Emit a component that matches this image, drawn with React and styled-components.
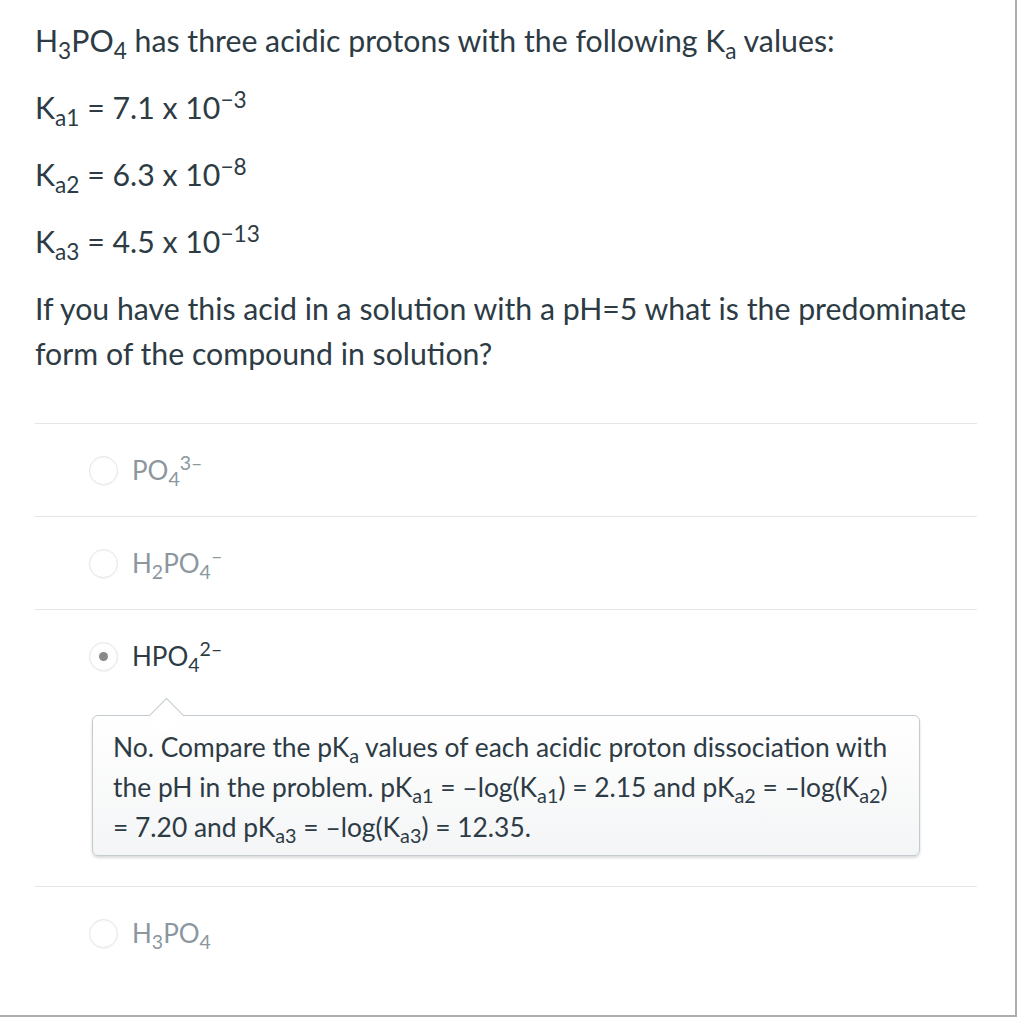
import React from 'react';
import styled, { createGlobalStyle } from 'styled-components';

const GlobalStyle = createGlobalStyle`
  html, body {
    margin: 0;
    padding: 0;
    background: #fff;
  }
  body {
    font-family: Lato, "Noto Sans", sans-serif;
    color: #2d3b45;
  }
`;

const Frame = styled.div`
  box-sizing: border-box;
  width: 1017px;
  height: 1017px;
  border-right: 2px solid #adadad;
  border-bottom: 2px solid #adadad;
  padding: 18px 38px 0 35px;
  overflow: hidden;
`;

const Text = styled.p`
  margin: 0 0 22px;
  font-size: 30.25px;
  line-height: 45px;

  sub, sup {
    font-size: 0.75em;
    line-height: 0;
  }
`;

const Answers = styled.div`
  margin-top: 47px;
`;

const Answer = styled.div`
  border-top: 1px solid #e6e6e6;
  padding: 28px 0 ${p => (p.$last ? '60px' : '28px')};
`;

const Choice = styled.label`
  display: flex;
  align-items: center;
  gap: 14px;
  padding-left: 54px;
  font-size: 26px;
  line-height: 36px;
  color: ${p => (p.$selected ? '#2d3b45' : '#8b969e')};

  sub, sup {
    font-size: 0.75em;
    line-height: 0;
  }
`;

const Radio = styled.span`
  box-sizing: border-box;
  flex: none;
  width: 29px;
  height: 29px;
  border-radius: 50%;
  border: 1px solid #e6e6e6;
  box-shadow: inset 0 1px 2px rgba(0, 0, 0, 0.03), 0 1px 1px rgba(0, 0, 0, 0.05);
  display: flex;
  align-items: center;
  justify-content: center;

  &::after {
    content: '';
    width: 9px;
    height: 9px;
    border-radius: 50%;
    background: #8a8a8a;
    display: ${p => (p.$checked ? 'block' : 'none')};
  }
`;

const Feedback = styled.div`
  position: relative;
  margin: 41px 57px 2px;
  padding: 11px 20px 8px;
  border: 1px solid #c4cbd0;
  border-radius: 6px;
  background: linear-gradient(#ffffff, #f4f5f6);
  box-shadow: 0 2px 3px rgba(0, 0, 0, 0.15);
  font-size: 26.4px;
  line-height: 40px;
  color: #2d3b45;

  sub {
    font-size: 0.75em;
    line-height: 0;
  }

  &::before {
    content: '';
    position: absolute;
    top: -13px;
    left: 61px;
    width: 24px;
    height: 24px;
    background: #fff;
    border-top: 1px solid #c4cbd0;
    border-left: 1px solid #c4cbd0;
    transform: rotate(45deg);
  }
`;

const options = [
  { id: 'a', label: <>PO<sub>4</sub><sup>3–</sup></> },
  { id: 'b', label: <>H<sub>2</sub>PO<sub>4</sub><sup>–</sup></> },
  { id: 'c', label: <>HPO<sub>4</sub><sup>2–</sup></>, selected: true },
  { id: 'd', label: <>H<sub>3</sub>PO<sub>4</sub></> },
];

export default function App() {
  return (
    <>
      <GlobalStyle />
      <Frame>
        <Text>H<sub>3</sub>PO<sub>4</sub> has three acidic protons with the following K<sub>a</sub> values:</Text>
        <Text>K<sub>a1</sub> = 7.1 x 10<sup>−3</sup></Text>
        <Text>K<sub>a2</sub> = 6.3 x 10<sup>−8</sup></Text>
        <Text>K<sub>a3</sub> = 4.5 x 10<sup>−13</sup></Text>
        <Text>If you have this acid in a solution with a pH=5 what is the predominate form of the compound in solution?</Text>
        <Answers>
          {options.map((o, i) => (
            <Answer key={o.id} $last={i === options.length - 1}>
              <Choice $selected={o.selected}>
                <Radio $checked={o.selected} />
                <span>{o.label}</span>
              </Choice>
              {o.selected && (
                <Feedback>
                  No. Compare the pK<sub>a</sub> values of each acidic proton dissociation with the pH in the problem. pK<sub>a1</sub> = –log(K<sub>a1</sub>) = 2.15 and pK<sub>a2</sub> = –log(K<sub>a2</sub>) = 7.20 and pK<sub>a3</sub> = –log(K<sub>a3</sub>) = 12.35.
                </Feedback>
              )}
            </Answer>
          ))}
        </Answers>
      </Frame>
    </>
  );
}
